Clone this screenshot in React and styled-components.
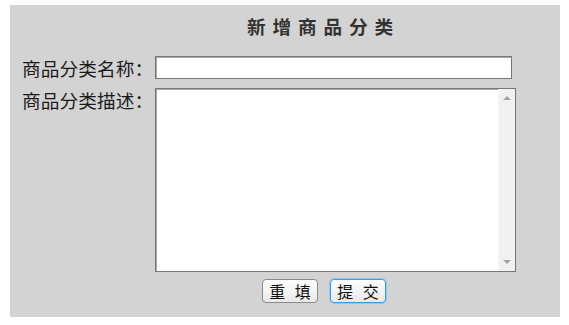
import React from "react";
import styled, { createGlobalStyle } from "styled-components";

const Global = createGlobalStyle`
  html, body { margin: 0; padding: 0; background: #fff; }
  body { font-family: "Noto Sans CJK SC", "Noto Sans", sans-serif; }
`;

const Page = styled.div`
  padding: 5px 9px 0 10px;
  width: 550px;
`;

const Panel = styled.div`
  background: #d3d3d3;
  height: 312px;
  box-sizing: border-box;
  padding: 10px 0 0 12px;
`;

const Title = styled.h2`
  margin: 0 0 0 225px;
  font-size: 18.67px;
  line-height: 22px;
  font-weight: bold;
  color: #333;
  letter-spacing: 1.3px;
  white-space: pre;
`;

const Form = styled.form`
  display: grid;
  grid-template-columns: 133px 1fr;
  row-gap: 9px;
  margin-top: 19px;
`;

const Label = styled.label`
  font-size: 18.67px;
  line-height: 23px;
  color: #1a1a1a;
  white-space: nowrap;
  letter-spacing: 0.1px;
  align-self: start;
`;

const fieldBorder = `
  border: 1px solid #777;
  box-shadow: inset 1px 1px 0 #a8a8a8;
`;

const TextInput = styled.input`
  box-sizing: border-box;
  width: 357px;
  height: 23px;
  margin: 0;
  padding: 1px 3px;
  ${fieldBorder}
  background: #fff;
  outline: none;
  font-size: 14px;
  font-family: inherit;
`;

const AreaWrap = styled.div`
  position: relative;
  width: 361px;
  height: 184px;
`;

const TextArea = styled.textarea`
  box-sizing: border-box;
  width: 100%;
  height: 100%;
  margin: 0;
  padding: 2px 20px 2px 3px;
  ${fieldBorder}
  background: #fff;
  outline: none;
  resize: none;
  overflow: hidden;
  font-size: 14px;
  font-family: inherit;
  display: block;
`;

const ScrollBar = styled.div`
  position: absolute;
  top: 1px;
  right: 1px;
  bottom: 1px;
  width: 17px;
  background: #f1f1f1;
  border-left: 1px solid #f7f7f7;
  display: flex;
  flex-direction: column;
  justify-content: space-between;
  align-items: center;
  padding: 7px 0 7px;
  box-sizing: border-box;
  pointer-events: none;
`;

const Arrow = styled.span`
  width: 0;
  height: 0;
  border-left: 4px solid transparent;
  border-right: 4px solid transparent;
  ${(p) =>
    p.$down
      ? "border-top: 4px solid #a3a3a3;"
      : "border-bottom: 4px solid #a3a3a3;"}
`;

const Buttons = styled.div`
  grid-column: 2;
  display: flex;
  gap: 12px;
  padding-left: 107px;
  margin-top: -2px;
`;

const Button = styled.button`
  box-sizing: border-box;
  width: 56px;
  height: 24px;
  margin: 0;
  padding: 0 0 0 3px;
  border: 1px solid ${(p) => (p.$focus ? "#3c9be0" : "#8a8a8a")};
  box-shadow: ${(p) => (p.$focus ? "0 0 0 1px #8cc8f2" : "none")};
  border-radius: 4px;
  background: linear-gradient(#fefefe, #e9e9e9);
  font-family: "Noto Sans CJK SC", sans-serif;
  font-size: 16px;
  line-height: 20px;
  letter-spacing: 3px;
  color: #111;
  white-space: pre;
  cursor: pointer;
`;

export default function App() {
  return (
    <>
      <Global />
      <Page>
        <Panel>
          <Title>{"新 增 商 品 分 类"}</Title>
          <Form onSubmit={(e) => e.preventDefault()}>
            <Label htmlFor="name">商品分类名称：</Label>
            <TextInput id="name" type="text" />
            <Label htmlFor="desc">商品分类描述：</Label>
            <AreaWrap>
              <TextArea id="desc" />
              <ScrollBar>
                <Arrow />
                <Arrow $down />
              </ScrollBar>
            </AreaWrap>
            <Buttons>
              <Button type="reset">{"重 填"}</Button>
              <Button type="submit" $focus>{"提 交"}</Button>
            </Buttons>
          </Form>
        </Panel>
      </Page>
    </>
  );
}
